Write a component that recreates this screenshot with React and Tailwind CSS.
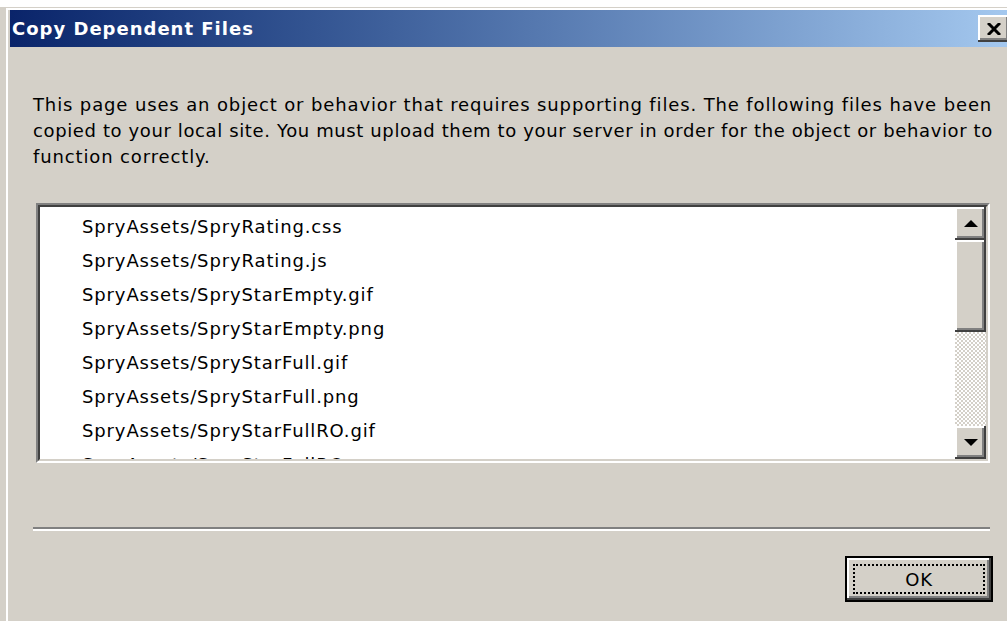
import React from "react";

const FILES = [
  "SpryAssets/SpryRating.css",
  "SpryAssets/SpryRating.js",
  "SpryAssets/SpryStarEmpty.gif",
  "SpryAssets/SpryStarEmpty.png",
  "SpryAssets/SpryStarFull.gif",
  "SpryAssets/SpryStarFull.png",
  "SpryAssets/SpryStarFullRO.gif",
  "SpryAssets/SpryStarFullRO.png",
];

// classic raised bevel used by buttons and scrollbar parts
const RAISED =
  "bg-[#d4d0c8] shadow-[inset_-2px_-2px_#404040,inset_2px_2px_#ffffff,inset_-4px_-4px_#808080,inset_4px_4px_#d4d0c8]";

function Arrow({ down }) {
  return (
    <svg width="14" height="8" viewBox="0 0 14 8">
      {down ? <polygon points="0,0 14,0 7,7" fill="#000" /> : <polygon points="7,0 14,7 0,7" fill="#000" />}
    </svg>
  );
}

function ScrollBar() {
  return (
    <div className="w-[31px] h-full flex flex-col">
      <div className={`${RAISED} h-[33px] flex items-center justify-center`}>
        <Arrow />
      </div>
      <div className={`${RAISED} h-[92px]`} />
      <div className="flex-1 bg-[repeating-conic-gradient(#d4d0c8_0%_25%,#ffffff_0%_50%)] bg-size-[4px_4px]" />
      <div className={`${RAISED} h-[33px] flex items-center justify-center`}>
        <Arrow down />
      </div>
    </div>
  );
}

export default function App() {
  return (
    <div className="w-[1007px] h-[621px] overflow-hidden bg-white pt-[7px] font-['DejaVu_Sans',sans-serif] text-black">
      <div className="h-full w-[1020px] bg-[#d4d0c8] pl-[6px] pt-[1px]">
        <div className="h-full border-l-2 border-t-2 border-white pl-[2px]">
          {/* title bar */}
          <div className="h-[37px] flex items-center justify-between bg-gradient-to-r from-[#0a246a] to-[#a6caf0] pr-[10px]">
            <span className="pl-[2px] text-white font-bold text-[18px] tracking-[1px] whitespace-nowrap">Copy Dependent Files</span>
            <div className={`${RAISED} w-[32px] h-[27px] flex items-center justify-center`}>
              <svg width="14" height="12" viewBox="0 0 14 12">
                <path d="M1 0 L13 12 M13 0 L1 12" stroke="#000" strokeWidth="3" />
              </svg>
            </div>
          </div>

          {/* body */}
          <div className="w-[997px] flex flex-col text-[18px] tracking-[0.87px]">
            <div className="mt-[45px] ml-[23px] leading-[26px] whitespace-nowrap">
              <div>This page uses an object or behavior that requires supporting files. The following files have been</div>
              <div className="tracking-[0.62px]">copied to your local site. You must upload them to your server in order for the object or behavior to</div>
              <div>function correctly.</div>
            </div>

            <div className="mt-[33px] ml-[26px] w-[954px] h-[260px] border-2 border-t-[#808080] border-l-[#808080] border-b-white border-r-white">
              <div className="h-full flex border-2 border-t-[#404040] border-l-[#404040] border-b-[#d4d0c8] border-r-[#d4d0c8] bg-white">
                <div className="flex-1 overflow-hidden pl-[42px] pt-[2px]">
                  {FILES.map((f) => (
                    <div key={f} className="h-[34px] flex items-center whitespace-nowrap">
                      {f}
                    </div>
                  ))}
                </div>
                <ScrollBar />
              </div>
            </div>

            <div className="mt-[64px] ml-[23px] w-[957px] border-t-2 border-t-[#808080] border-b-2 border-b-white" />

            <div className="mt-[25px] ml-[835px] w-[148px] h-[46px] border-2 border-black">
              <div className={`${RAISED} h-full p-[6px]`}>
                <div className="h-full border-2 border-dotted border-black flex items-center justify-center">
                  OK
                </div>
              </div>
            </div>
          </div>
        </div>
      </div>
    </div>
  );
}
